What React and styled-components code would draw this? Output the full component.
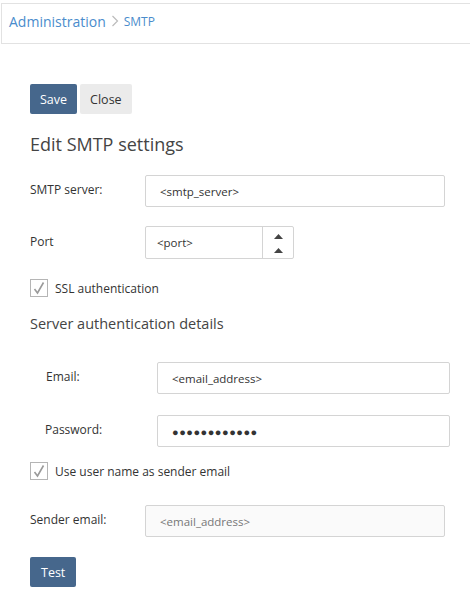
import React from "react";
import styled, { createGlobalStyle } from "styled-components";

const GlobalStyle = createGlobalStyle`
  body {
    margin: 0;
    background: #fff;
    font-family: "Open Sans", "Noto Sans", sans-serif;
    color: #333;
  }
`;

const Breadcrumb = styled.div`
  margin: 3px 0 0 1px;
  height: 41px;
  box-sizing: border-box;
  border: 1px solid #e2e2e2;
  border-right: none;
  display: flex;
  align-items: center;
  padding: 0 0 5px 7px;
  gap: 5px;
`;

const Crumb = styled.span`
  font-size: ${(p) => p.size || 14}px;
  color: #4a8ccc;
`;

const Chevron = styled.svg`
  width: 8px;
  height: 12px;
`;

const Page = styled.div`
  padding: 40px 0 0 30px;
`;

const Toolbar = styled.div`
  display: flex;
  gap: 3px;
`;

const Button = styled.button`
  height: 30px;
  padding: 0 ${(p) => p.pad || 10}px;
  border: none;
  border-radius: 2px;
  font-family: inherit;
  font-size: 12.5px;
  background: ${(p) => (p.primary ? "#46678c" : "#ebebeb")};
  color: ${(p) => (p.primary ? "#fff" : "#333")};
`;

const Title = styled.h2`
  margin: 18px 0 19px;
  font-size: 18px;
  line-height: 24px;
  font-weight: 400;
  color: #444;
`;

const SubTitle = styled.h3`
  margin: 17px 0 28px;
  font-size: 14.5px;
  line-height: 20px;
  font-weight: 400;
  color: #444;
`;

const Row = styled.div`
  display: flex;
  align-items: center;
  padding-left: ${(p) => p.indent || 0}px;
  margin-top: ${(p) => p.mt || 0}px;
  margin-bottom: ${(p) => p.mb || 0}px;
`;

const Label = styled.label`
  width: ${(p) => p.w || 115}px;
  font-size: 12px;
  color: #333;
  padding-bottom: 3px;
  flex-shrink: 0;
`;

const Input = styled.div`
  box-sizing: border-box;
  width: ${(p) => p.w}px;
  height: 32px;
  border: 1px solid #d4d4d4;
  border-radius: 2px;
  background: ${(p) => (p.disabled ? "#fafafa" : "#fff")};
  color: ${(p) => (p.disabled ? "#777" : "#333")};
  font-size: 11.5px;
  display: flex;
  align-items: center;
  padding-left: ${(p) => p.pl || 14}px;
`;

const Dots = styled.span`
  font-size: 11px;
  letter-spacing: 0.5px;
  color: #333;
`;

const Spinner = styled.div`
  box-sizing: border-box;
  width: 149px;
  height: 33px;
  border: 1px solid #d4d4d4;
  border-radius: 2px;
  display: flex;
`;

const SpinValue = styled.div`
  flex: 1;
  display: flex;
  align-items: center;
  padding-left: 11px;
  font-size: 11.5px;
  border-right: 1px solid #d4d4d4;
`;

const SpinArrows = styled.div`
  width: 30px;
  display: flex;
  flex-direction: column;
  align-items: center;
  justify-content: space-between;
  padding: 7px 0 5px;
  box-sizing: border-box;
`;

const Check = styled.span`
  box-sizing: border-box;
  width: 18px;
  height: 18px;
  border: 1px solid #b5b5b5;
  display: inline-flex;
  align-items: center;
  justify-content: center;
  margin-right: 7px;
`;

const CheckText = styled.span`
  font-size: 12px;
  color: #333;
`;

const Arrow = () => (
  <svg width="9" height="5" viewBox="0 0 9 5">
    <path d="M0 5 L4.5 0 L9 5 Z" fill="#444" />
  </svg>
);

const CheckBox = ({ children }) => (
  <Row>
    <Check>
      <svg width="14" height="14" viewBox="0 0 14 14">
        <path d="M2.5 8 L5.5 12 L11.5 1.5" stroke="#9a9a9a" strokeWidth="1.6" fill="none" />
      </svg>
    </Check>
    <CheckText>{children}</CheckText>
  </Row>
);

export default function App() {
  return (
    <>
      <GlobalStyle />
      <Breadcrumb>
        <Crumb>Administration</Crumb>
        <Chevron viewBox="0 0 8 12">
          <path d="M1.5 1 L6.5 6 L1.5 11" stroke="#bbb" strokeWidth="1.2" fill="none" />
        </Chevron>
        <Crumb size={12}>SMTP</Crumb>
      </Breadcrumb>
      <Page>
        <Toolbar>
          <Button primary>Save</Button>
          <Button>Close</Button>
        </Toolbar>
        <Title>Edit SMTP settings</Title>
        <Row mb={19}>
          <Label>SMTP server:</Label>
          <Input w={300}>&lt;smtp_server&gt;</Input>
        </Row>
        <Row mb={20}>
          <Label>Port</Label>
          <Spinner>
            <SpinValue>&lt;port&gt;</SpinValue>
            <SpinArrows>
              <Arrow />
              <Arrow />
            </SpinArrows>
          </Spinner>
        </Row>
        <CheckBox>SSL authentication</CheckBox>
        <SubTitle>Server authentication details</SubTitle>
        <Row indent={16} mb={21}>
          <Label w={111}>Email:</Label>
          <Input w={293}>&lt;email_address&gt;</Input>
        </Row>
        <Row indent={15} mb={15}>
          <Label w={112}>Password:</Label>
          <Input w={293}>
            <Dots>●●●●●●●●●●●●</Dots>
          </Input>
        </Row>
        <CheckBox>Use user name as sender email</CheckBox>
        <Row mt={25} mb={20}>
          <Label>Sender email:</Label>
          <Input w={300} disabled>&lt;email_address&gt;</Input>
        </Row>
        <Button primary pad={11}>Test</Button>
      </Page>
    </>
  );
}
